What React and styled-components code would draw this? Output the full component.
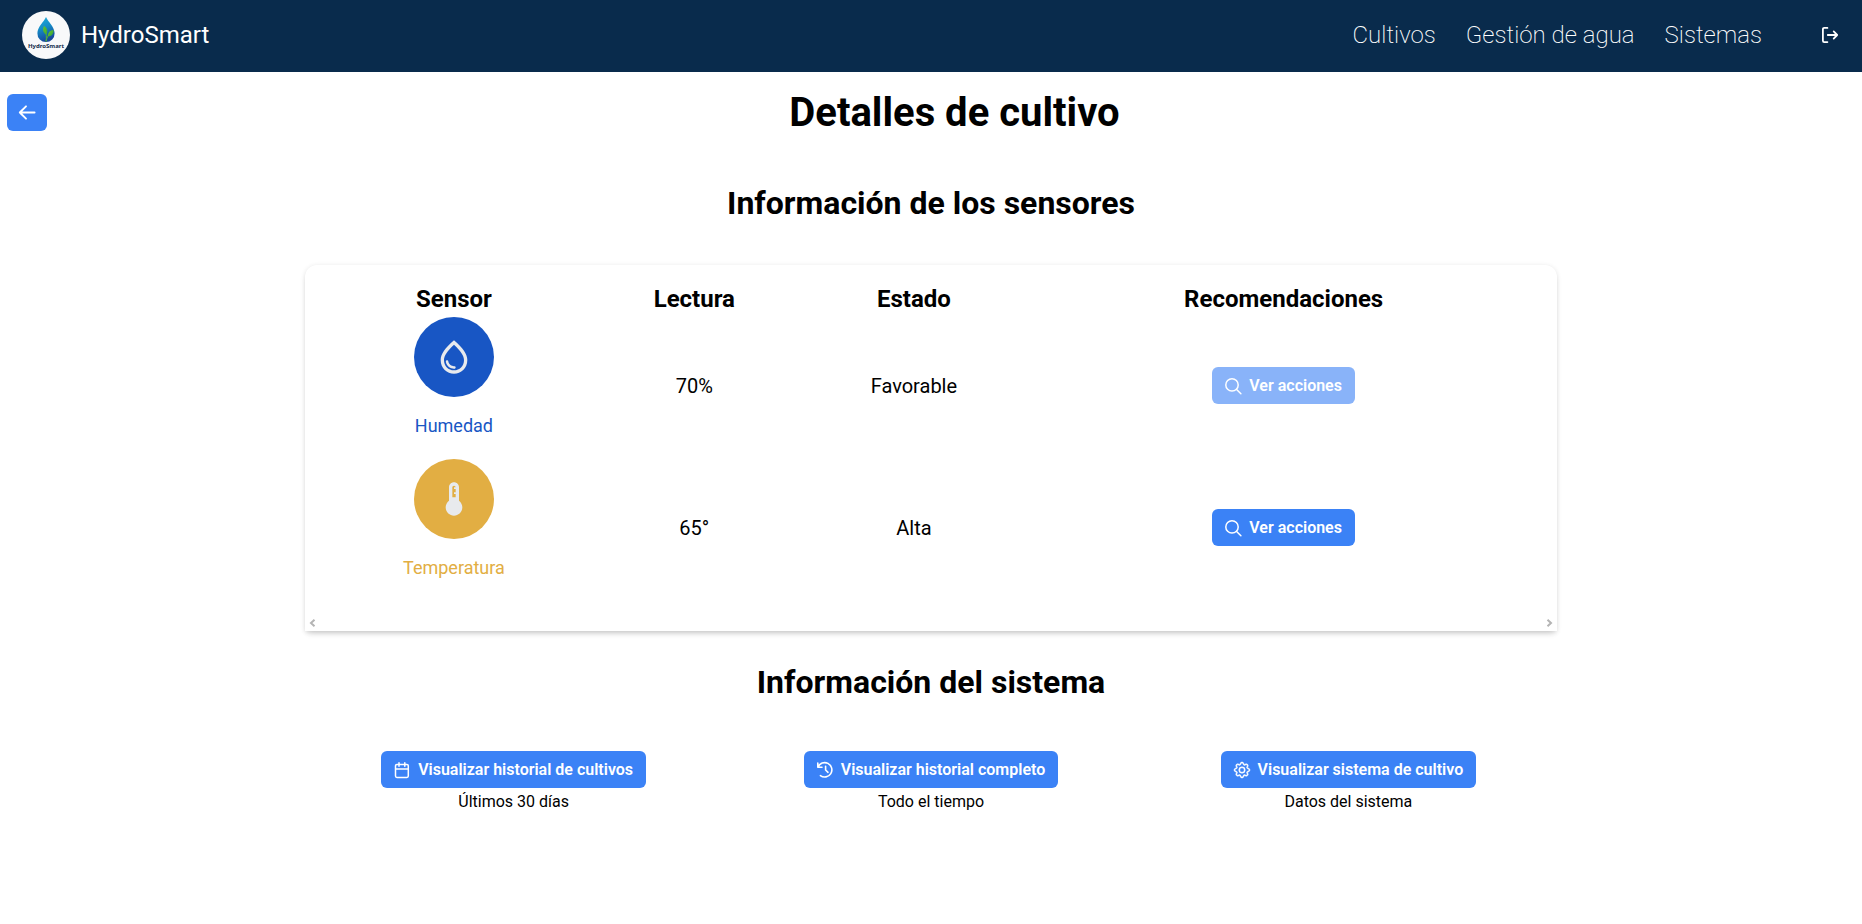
import React from "react";
import styled, { createGlobalStyle } from "styled-components";
import { BsGear } from "react-icons/bs";

const GlobalStyle = createGlobalStyle`
  *, *::before, *::after { box-sizing: border-box; }
  body {
    margin: 0;
    background: #ffffff;
    color: #000000;
    font-family: Roboto, "Liberation Sans", sans-serif;
    font-size: 16px;
  }
`;

const NavBar = styled.header`
  display: flex;
  align-items: center;
  justify-content: space-between;
  min-height: 72px;
  padding: 0 24px 0 22px;
  background: #092b4c;
`;

const Brand = styled.a`
  display: flex;
  align-items: center;
  gap: 11px;
  margin-bottom: 2px;
  color: #ffffff;
  font-size: 24px;
  line-height: 28px;
  text-decoration: none;
`;

const Nav = styled.nav`
  display: flex;
  align-items: center;
  gap: 30px;
  margin-bottom: 2px;
`;

const NavLink = styled.a`
  color: #ffffff;
  font-size: 24px;
  font-weight: 200;
  line-height: 28px;
  text-decoration: none;
`;

const LogoutButton = styled.button`
  display: flex;
  align-items: center;
  justify-content: center;
  margin-left: 30px;
  padding: 8px 8px 8px 0;
  margin-right: -8px;
  border: 0;
  background: transparent;
  color: #ffffff;
  cursor: pointer;
`;

const TitleRow = styled.div`
  display: flex;
  align-items: center;
  padding: 17px 0 0 7px;
`;

const PageTitle = styled.h1`
  flex: 1;
  margin: 0;
  font-size: 40px;
  font-weight: 700;
  line-height: 47px;
  text-align: center;
`;

const Content = styled.main`
  width: 67.25%;
  margin: 0 auto;
`;

const SectionTitle = styled.h2`
  margin: 0;
  padding: ${(p) => p.$top}px 0 ${(p) => p.$bottom}px;
  font-size: 32px;
  font-weight: 700;
  line-height: 38px;
  text-align: center;
`;

const Card = styled.section`
  padding-top: 14px;
  border-radius: 12px 12px 0 0;
  background: #ffffff;
  box-shadow: 0 5px 6px -3px rgba(0, 0, 0, 0.16), 0 1px 5px rgba(0, 0, 0, 0.12);
`;

const TableArea = styled.div`
  padding: 0 16px 13px;
`;

const Table = styled.table`
  width: 100%;
  table-layout: fixed;
  border-collapse: separate;
  border-spacing: 0 5px;
  text-align: center;
`;

const HeadCell = styled.th`
  width: ${(p) => p.$width};
  padding: 2px 0 0;
  font-size: 24px;
  font-weight: 700;
  line-height: 26px;
`;

const Cell = styled.td`
  padding: 0;
  font-size: 20px;
  line-height: 24px;
  vertical-align: middle;
`;

const SensorBadge = styled.div`
  display: flex;
  align-items: center;
  justify-content: center;
  width: 80px;
  height: 80px;
  margin: 0 auto;
  border-radius: 50%;
  background: ${(p) => p.$color};
`;

const SensorName = styled.p`
  margin: 18px 0;
  color: ${(p) => p.$color};
  font-size: 18px;
  line-height: 21px;
`;

const ScrollStrip = styled.div`
  display: flex;
  align-items: center;
  justify-content: space-between;
  height: 17px;
  padding: 0 4px;
`;

const Button = styled.button`
  display: inline-flex;
  align-items: center;
  justify-content: center;
  gap: 8px;
  height: 37px;
  padding: 0 ${(p) => (p.$iconOnly ? 12 : 13)}px;
  border: 0;
  border-radius: 6px;
  background: #3b82f6;
  color: #ffffff;
  font-family: inherit;
  font-size: 16px;
  font-weight: 600;
  line-height: 19px;
  vertical-align: middle;
  cursor: pointer;

  &:disabled {
    opacity: 0.6;
    cursor: default;
  }
`;

const Actions = styled.div`
  display: grid;
  grid-template-columns: repeat(3, 1fr);
`;

const Action = styled.div`
  display: flex;
  flex-direction: column;
  align-items: center;
  gap: 4px;
`;

const Caption = styled.span`
  font-size: 16px;
  line-height: 19px;
`;

const Glyph = styled.svg`
  flex: none;
  display: block;
  overflow: visible;
`;

function LineIcon({ children, weight = 1.6 }) {
  return (
    <Glyph
      width="16"
      height="16"
      viewBox="0 0 16 16"
      fill="none"
      stroke="currentColor"
      strokeWidth={weight}
      strokeLinecap="round"
      strokeLinejoin="round"
      aria-hidden="true"
    >
      {children}
    </Glyph>
  );
}

const ArrowLeftIcon = () => (
  <LineIcon weight={1.9}>
    <path d="M15.600 7.500H.8M7 1.300.8 7.500 7 13.700" />
  </LineIcon>
);

const LogoutIcon = () => (
  <LineIcon weight={1.8}>
    <path d="M5.400.9H2.200C1.400.9.9 1.400.9 2.200v11.600c0 .8.5 1.300 1.300 1.300h3.200M5.800 8h9.400M11.700 4.400 15.200 8l-3.500 3.600" />
  </LineIcon>
);

const SearchIcon = () => (
  <LineIcon weight={1.5}>
    <circle cx="7" cy="6.900" r="6.200" />
    <path d="m11.600 11.500 4.300 4.300" />
  </LineIcon>
);

const CalendarIcon = () => (
  <LineIcon weight={1.5}>
    <rect x="1.500" y="2.400" width="12.800" height="13" rx="1.400" />
    <path d="M1.700 7h12.400M5 .7v3.600M10.800.7v3.600" />
  </LineIcon>
);

const HistoryIcon = () => (
  <LineIcon weight={1.6}>
    <path d="M.8 1v4.200H5M1 5.100A7.200 7.200 0 1 1 3.400 13.600M8.600 4.200V8l2.400 2.300" />
  </LineIcon>
);

const GearIcon = () => (
  <Glyph as={BsGear} size={16} strokeWidth={0.5} aria-hidden="true" />
);

const DropIcon = () => (
  <Glyph width="40" height="40" viewBox="0 0 24 24" fill="#e8eaed" aria-hidden="true">
    <path d="M12 2c-5.330 4.550-8 8.480-8 11.800 0 4.980 3.800 8.200 8 8.200s8-3.220 8-8.200c0-3.320-2.670-7.250-8-11.800zm0 18c-3.350 0-6-2.570-6-6.200 0-2.340 1.950-5.440 6-9.140 4.050 3.700 6 6.790 6 9.140 0 3.630-2.650 6.200-6 6.200zm-4.170-6c.37 0 .67.26.74.62.41 2.220 2.280 2.980 3.640 2.870.43-.02.79.32.79.75 0 .4-.32.73-.72.75-2.130.13-4.620-1.090-5.190-4.120a.75.75 0 0 1 .74-.87z" />
  </Glyph>
);

const ThermometerIcon = () => (
  <Glyph width="40" height="40" viewBox="0 0 24 24" fill="#e8eaed" aria-hidden="true">
    <path d="M15 13V5c0-1.660-1.340-3-3-3S9 3.340 9 5v8c-1.210.91-2 2.370-2 4 0 2.760 2.240 5 5 5s5-2.240 5-5c0-1.630-.79-3.090-2-4zm-4-8c0-.55.45-1 1-1s1 .45 1 1h-1v1h1v2h-1v1h1v2h-2V5z" />
  </Glyph>
);

const Chevron = ({ d }) => (
  <Glyph width="7" height="8" viewBox="0 0 7 8" fill="none" stroke="#b4b4b4" strokeWidth="2" aria-hidden="true">
    <path d={d} />
  </Glyph>
);

const Logo = () => (
  <Glyph width="48" height="48" viewBox="0 0 48 48" aria-hidden="true">
    <defs>
      <linearGradient id="drop" x1="0" y1="0" x2="0.300" y2="1">
        <stop offset="0" stopColor="#1fb0dc" />
        <stop offset="0.500" stopColor="#158bc6" />
        <stop offset="1" stopColor="#17489b" />
      </linearGradient>
      <linearGradient id="leaf" x1="0" y1="0" x2="1" y2="1">
        <stop offset="0" stopColor="#6bc52c" />
        <stop offset="1" stopColor="#2fa03c" />
      </linearGradient>
    </defs>
    <circle cx="24" cy="24" r="24" fill="#f8f9fa" />
    <path d="M24 6c2 4.800 8.600 10 8.600 16.200A8.500 8.500 0 0 1 24 31a8.500 8.500 0 0 1-8.600-8.800C15.400 16 22 10.800 24 6z" fill="url(#drop)" />
    <path d="M22 15c3.600 2.200 4 5.400 2.300 8.600C21 22 20.300 18.500 22 15z" fill="url(#leaf)" />
    <path d="M31.500 19c.3 4.200-2 6.300-5.800 6.300.2-3.800 2.200-5.900 5.800-6.300z" fill="url(#leaf)" />
    <path d="M23.200 19c1.200 4 1.500 7 .8 11.500M29 21.500c-2.600 2.400-4.200 4.900-4.900 8.800" fill="none" stroke="#56b82f" strokeWidth="0.900" />
    <text x="24" y="37" textAnchor="middle" fontFamily='"Noto Sans", sans-serif' fontSize="6" fontWeight="700" fill="#12294a">
      HydroSmart
    </text>
  </Glyph>
);

const sensors = [
  { name: "Humedad", color: "#1856c4", Icon: DropIcon, reading: "70%", state: "Favorable", disabled: true },
  { name: "Temperatura", color: "#e2ae43", Icon: ThermometerIcon, reading: "65°", state: "Alta", disabled: false },
];

const actions = [
  { label: "Visualizar historial de cultivos", caption: "Últimos 30 días", Icon: CalendarIcon },
  { label: "Visualizar historial completo", caption: "Todo el tiempo", Icon: HistoryIcon },
  { label: "Visualizar sistema de cultivo", caption: "Datos del sistema", Icon: GearIcon },
];

export default function App() {
  return (
    <>
      <GlobalStyle />
      <NavBar>
        <Brand href="#">
          <Logo />
          HydroSmart
        </Brand>
        <Nav>
          <NavLink href="#cultivos">Cultivos</NavLink>
          <NavLink href="#agua">Gestión de agua</NavLink>
          <NavLink href="#sistemas">Sistemas</NavLink>
          <LogoutButton type="button" aria-label="Cerrar sesión">
            <LogoutIcon />
          </LogoutButton>
        </Nav>
      </NavBar>

      <TitleRow>
        <Button type="button" $iconOnly aria-label="Volver">
          <ArrowLeftIcon />
        </Button>
        <PageTitle>Detalles de cultivo</PageTitle>
      </TitleRow>

      <Content>
        <SectionTitle $top={48} $bottom={43}>Información de los sensores</SectionTitle>
        <Card>
          <TableArea>
            <Table>
              <thead>
                <tr>
                  <HeadCell scope="col" $width="21.8%">Sensor</HeadCell>
                  <HeadCell scope="col" $width="17.6%">Lectura</HeadCell>
                  <HeadCell scope="col" $width="18.4%">Estado</HeadCell>
                  <HeadCell scope="col" $width="42.2%">Recomendaciones</HeadCell>
                </tr>
              </thead>
              <tbody>
                {sensors.map(({ name, color, Icon, reading, state, disabled }) => (
                  <tr key={name}>
                    <Cell>
                      <SensorBadge $color={color}>
                        <Icon />
                      </SensorBadge>
                      <SensorName $color={color}>{name}</SensorName>
                    </Cell>
                    <Cell>{reading}</Cell>
                    <Cell>{state}</Cell>
                    <Cell>
                      <Button type="button" disabled={disabled}>
                        <SearchIcon />
                        Ver acciones
                      </Button>
                    </Cell>
                  </tr>
                ))}
              </tbody>
            </Table>
          </TableArea>
          <ScrollStrip>
            <Chevron d="M5.500.8 2 4l3.500 3.200" />
            <Chevron d="M1.500.8 5 4 1.500 7.200" />
          </ScrollStrip>
        </Card>

        <SectionTitle $top={32} $bottom={50}>Información del sistema</SectionTitle>
        <Actions>
          {actions.map(({ label, caption, Icon }) => (
            <Action key={label}>
              <Button type="button">
                <Icon />
                {label}
              </Button>
              <Caption>{caption}</Caption>
            </Action>
          ))}
        </Actions>
      </Content>
    </>
  );
}
